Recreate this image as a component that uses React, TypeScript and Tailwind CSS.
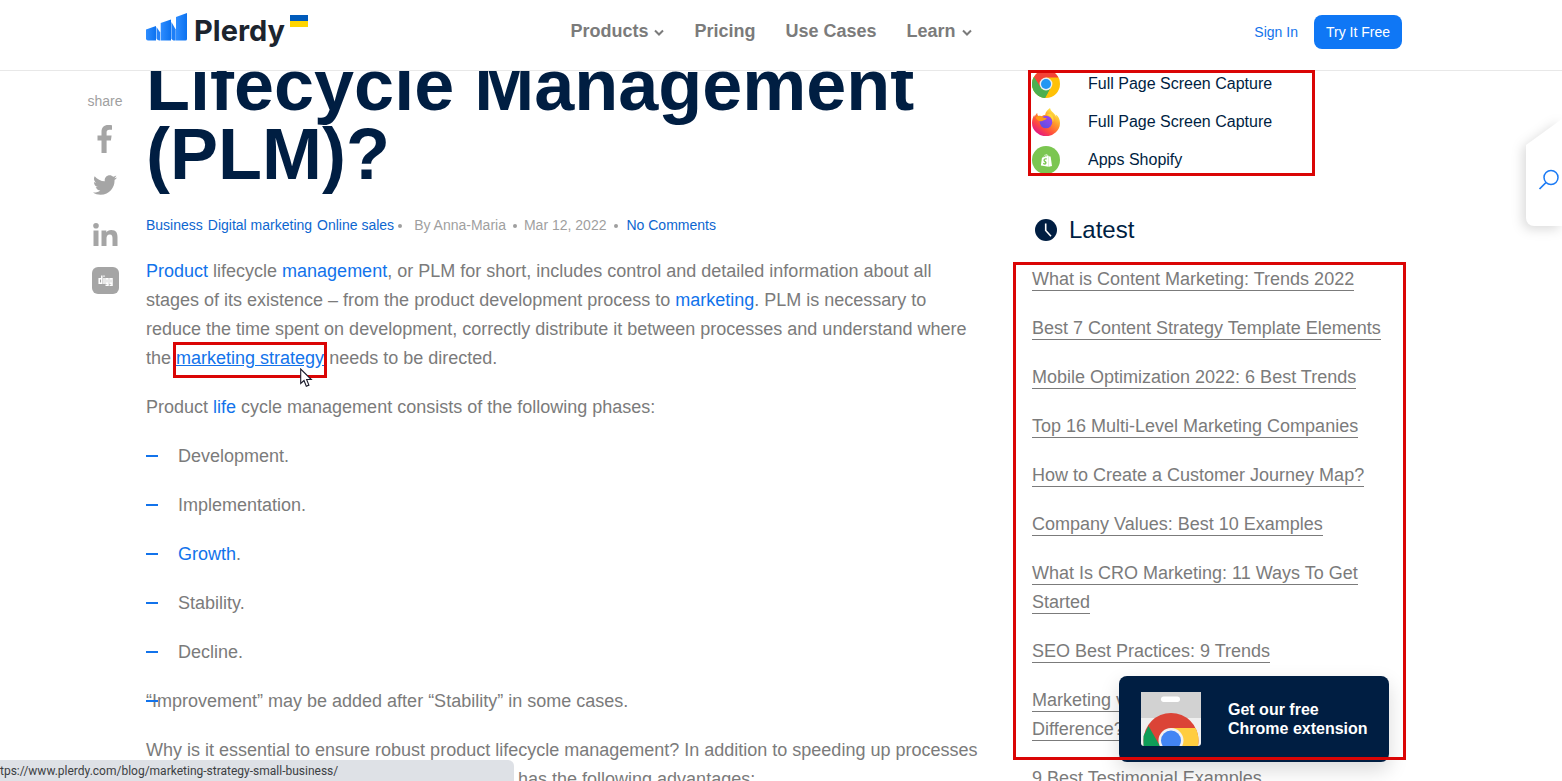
import React from "react";
import { FaShopify, FaTwitter } from "react-icons/fa";

const phases = ["Development.", "Implementation.", "Growth.", "Stability.", "Decline."];

const latest = [
  "What is Content Marketing: Trends 2022",
  "Best 7 Content Strategy Template Elements",
  "Mobile Optimization 2022: 6 Best Trends",
  "Top 16 Multi-Level Marketing Companies",
  "How to Create a Customer Journey Map?",
  "Company Values: Best 10 Examples",
  "What Is CRO Marketing: 11 Ways To Get Started",
  "SEO Best Practices: 9 Trends",
  "Marketing vs Advertising: What’s the Difference?",
  "9 Best Testimonial Examples",
];

function Logo() {
  return (
    <a href="#" className="flex items-start pb-[2px]" aria-label="Plerdy">
      <svg width="42" height="28" viewBox="0 0 42 28" className="mt-px shrink-0">
        <defs>
          <linearGradient id="bars" x1="0" x2="1">
            <stop offset="0" stopColor="#2e8dff" />
            <stop offset="1" stopColor="#0c72f0" />
          </linearGradient>
        </defs>
        <path d="M0 16.500 10 13v14.500H2a2 2 0 0 1-2-2z" fill="url(#bars)" />
        <path d="M10.500 14 14.200 19.500v8h-.7c-1.500 0-2.300-.8-3-2z" fill="#2583fa" />
        <path d="M14.700 10 25 6.500v21H14.700z" fill="url(#bars)" />
        <path d="M25.400 9 29.700 16.500v11h-1.500c-1.200 0-2-.5-2.800-2z" fill="#1d7ff8" />
        <path d="M30 4 41 0v26a1.500 1.500 0 0 1-1.500 1.500H30z" fill="url(#bars)" />
      </svg>
      <span className="ml-[6px] font-['Inter'] text-[29px] leading-[38px] font-bold text-[#1c242e]">Plerdy</span>
      <svg width="18" height="12" className="mt-[3px] ml-[5px] shrink-0">
        <rect width="18" height="6" fill="#005bbb" />
        <rect y="6" width="18" height="6" fill="#ffd500" />
      </svg>
    </a>
  );
}

function Chevron() {
  return (
    <svg width="10" height="8" viewBox="0 0 10 8" className="mt-[3px]">
      <path d="M1 1.500 5 5.500 9 1.500" fill="none" stroke="#7b7b7b" strokeWidth="2" />
    </svg>
  );
}

function FacebookMark() {
  return (
    <svg width="16" height="28" viewBox="0 0 16 28" fill="#a5a5a5">
      <path d="M4.500 28V15.500H.5v-5h4V7c0-4.600 2.600-7 6.600-7 1.700 0 3.400.2 3.900.3v4.500h-2.700c-2 0-2.700 1-2.700 2.500v3.200h5l-.7 5H9.600V28z" />
    </svg>
  );
}

function LinkedinMark() {
  return (
    <svg width="25" height="23" viewBox="0 0 25 23" fill="#a5a5a5">
      <circle cx="3" cy="2.800" r="2.800" />
      <path d="M.5 7.500h5V23h-5z" />
      <path d="M8.500 7.500h4.800v2.100c.8-1.400 2.500-2.500 5-2.500 5 0 6.200 3 6.200 7.400V23h-5v-7.600c0-2-.3-4-2.700-4-2.600 0-3.300 1.900-3.300 4V23h-5z" />
    </svg>
  );
}

function ClockIcon() {
  return (
    <svg width="22" height="22" viewBox="0 0 22 22">
      <circle cx="11" cy="11" r="11" fill="#001e42" />
      <path d="M10.700 4.500v7l5.300 5.700" fill="none" stroke="#fff" strokeWidth="1.600" />
    </svg>
  );
}

function ChromeIcon() {
  return (
    <svg width="28" height="28" viewBox="0 0 28 28">
      <circle cx="14" cy="14" r="14" fill="#ffc107" />
      <path d="M1.900 7A14 14 0 0 0 13 28l6-11-5-3z" fill="#4caf50" />
      <path d="M1.900 7A14 14 0 0 1 26.500 7.600H14L8.500 17.500z" fill="#f44336" />
      <path d="M1.900 7A14 14 0 0 0 13 28l5.500-10.500-9.500.5z" fill="#4caf50" />
      <circle cx="14" cy="14" r="6.400" fill="#eceff1" />
      <circle cx="14" cy="14" r="5" fill="#2196f3" />
    </svg>
  );
}

function FirefoxIcon() {
  return (
    <svg width="28" height="28" viewBox="0 0 28 28">
      <defs>
        <linearGradient id="ffBody" x1="0.850" y1="0.100" x2="0.200" y2="0.950">
          <stop offset="0" stopColor="#fff14a" />
          <stop offset="0.350" stopColor="#ff9a2a" />
          <stop offset="0.700" stopColor="#ff4a3f" />
          <stop offset="1" stopColor="#e0148c" />
        </linearGradient>
        <linearGradient id="ffGlobe" x1="0.800" y1="0" x2="0.200" y2="1">
          <stop offset="0" stopColor="#a044f0" />
          <stop offset="1" stopColor="#5a4fe0" />
        </linearGradient>
      </defs>
      <path
        d="M18 0c.6 2.800 3 4.300 4.600 6.300 1.200 1.500 1.500 2.400 1.700 3.100 0-1-.2-2-.6-2.900C26.500 8.300 28 11.500 28 15a14 13.200 0 0 1-28 0c0-3.300 1-6.300 2.300-8.300 0 .8.100 1.400.3 2C3.300 7.200 4 6 5.200 5c0 1.200.3 2.100.9 2.900 1.200-.1 2.400 0 3.500.4 1-.9 2.300-1.400 3.700-1.500C13 4.500 15.500 1.800 18 0z"
        fill="url(#ffBody)"
      />
      <circle cx="14" cy="14" r="6.300" fill="url(#ffGlobe)" />
      <path d="M3.500 9.500c2-1.800 5-1.800 7-.5 1 .7 2 1 4.200 1-.2 1.700-2.600 2-3.600 2.600-1 .7-2 .8-3.600.4C5.500 12.600 4.500 11.500 3.500 9.500z" fill="#ff9a16" />
      <path d="M14.500 7c3 .6 6.300 3 6.300 7.500 1.500-3.500.5-7-2.300-9z" fill="#ffd83a" />
    </svg>
  );
}

function ShopifyIcon() {
  return (
    <span className="flex size-7 items-center justify-center rounded-full bg-[#7bc651]">
      <FaShopify className="size-[13px] text-white" />
    </span>
  );
}

function DiggIcon() {
  return (
    <svg width="27" height="27" viewBox="0 0 27 27">
      <rect width="27" height="27" rx="6" fill="#a5a5a5" />
      <g fill="none" stroke="#fff" strokeWidth="1.500">
        <path d="M9.800 8.500v7.800H7.200v-4.600h2.600" />
        <path d="M12 11v6M12 8.500v1.300" />
        <path d="M16 16.300h-2v-4.600h2v6.600h-2.500" />
        <path d="M20 16.300h-2v-4.600h2v6.600h-2.500" />
      </g>
    </svg>
  );
}

function StoreIcon() {
  return (
    <svg width="60" height="54" viewBox="0 0 60 54" className="shrink-0">
      <defs>
        <clipPath id="store">
          <path d="M0 0h60v51a3 3 0 0 1-3 3H3a3 3 0 0 1-3-3z" />
        </clipPath>
      </defs>
      <g clipPath="url(#store)">
        <rect width="60" height="54" fill="#efefef" />
        <rect width="60" height="26" fill="#d2d2d2" />
        <rect x="20" y="4.500" width="19" height="5.500" rx="2.700" fill="#fff" />
        <circle cx="30" cy="48.500" r="27.500" fill="#db4437" />
        <path d="M7.500 34 19 54H2.500V44z" fill="#0f9d58" />
        <path d="M30 36h24.600A27.500 27.500 0 0 1 57 54H30z" fill="#ffcd40" />
        <circle cx="30" cy="48.500" r="12.500" fill="#f1f1f1" />
        <circle cx="30" cy="48.500" r="10" fill="#4285f4" />
      </g>
    </svg>
  );
}

function Pointer() {
  return (
    <svg width="13" height="20" viewBox="0 0 13 20" className="absolute top-6 left-[124px] z-40">
      <path d="M.7 1v14.500l3.300-3 2.300 5.700 2.600-1.100L6.600 11.500h4.700z" fill="#fff" stroke="#1b1b2b" strokeWidth="1.100" />
    </svg>
  );
}

const link = "text-[#1273eb]";

export default function App() {
  return (
    <div className="relative h-screen overflow-hidden bg-white font-['Liberation_Sans',Arial,sans-serif] text-lg leading-[29px] text-[#7b7b7b]">
      <header className="absolute inset-x-0 top-0 z-20 h-[71px] border-b border-[#e8e8e8] bg-white pr-[160px] pl-[146px]">
        <div className="grid h-16 grid-cols-[1fr_auto_1fr] items-center">
          <Logo />
          <nav className="flex items-center gap-[30px] pr-[6px] pb-[2px] font-bold">
            <button className="flex items-center gap-[6px]">
              Products <Chevron />
            </button>
            <a href="#">Pricing</a>
            <a href="#">Use Cases</a>
            <button className="flex items-center gap-[6px]">
              Learn <Chevron />
            </button>
          </nav>
          <div className="flex items-center justify-end gap-4 text-sm">
            <a href="#" className={link}>Sign In</a>
            <button className="h-[34px] rounded-lg bg-[#0f77f5] px-3 text-white">Try It Free</button>
          </div>
        </div>
      </header>

      <main className="grid grid-cols-[82px_minmax(0,1fr)_370px] pr-[160px] pl-16">
        <aside className="flex flex-col items-center pt-[91px] text-sm leading-5 text-[#9f9f9f]">
          <span>share</span>
          <a href="#" aria-label="Facebook" className="mt-[14px]"><FacebookMark /></a>
          <a href="#" aria-label="Twitter" className="mt-5"><FaTwitter className="size-6 text-[#a5a5a5]" /></a>
          <a href="#" aria-label="LinkedIn" className="mt-[26px]"><LinkedinMark /></a>
          <a href="#" aria-label="Digg" className="mt-[21px]"><DiggIcon /></a>
        </aside>

        <article className="pt-[51px] pr-[46px]">
          <h1 className="text-[72px] leading-[69px] font-bold text-[#001e42]">Lifecycle Management (PLM)?</h1>
          <div className="mt-[26px] mb-[22px] flex items-center text-sm leading-5 text-[#9f9f9f]">
            <div className="flex gap-[5px] text-[#0d66d0]">
              <a href="#">Business</a>
              <a href="#">Digital marketing</a>
              <a href="#">Online sales</a>
            </div>
            <i className="mt-[2px] mr-3 ml-1 size-1 rounded-full bg-[#9f9f9f]" />
            <span>By Anna-Maria</span>
            <i className="mx-[7px] mt-[2px] size-1 rounded-full bg-[#9f9f9f]" />
            <time>Mar 12, 2022</time>
            <i className="mx-2 mt-[2px] size-1 rounded-full bg-[#9f9f9f]" />
            <a href="#" className="text-[#0d66d0]">No Comments</a>
          </div>
          <div className="space-y-5">
            <p>
              <a href="#" className={link}>Product</a> lifecycle <a href="#" className={link}>management</a>, or PLM for
              short, includes control and detailed information about all stages of its existence – from the product
              development process to <a href="#" className={link}>marketing</a>. PLM is necessary to reduce the time spent
              on development, correctly distribute it between processes and understand where the{" "}
              <span className="relative inline-block">
                <a href="#" className="text-[#1273eb] underline">marketing strategy</a>
                <span className="absolute -inset-x-[3px] -top-[2px] z-30 h-9 border-3 border-[#da0505]" />
                <Pointer />
              </span>{" "}
              needs to be directed.
            </p>
            <p>
              Product <a href="#" className={link}>life</a> cycle management consists of the following phases:
            </p>
            <ul className="space-y-5">
              {phases.map((phase) => (
                <li key={phase} className="flex items-center">
                  <span className="mr-5 mb-[2px] h-[2px] w-3 bg-[#1273eb]" />
                  {phase === "Growth." ? (
                    <span><a href="#" className={link}>Growth</a>.</span>
                  ) : (
                    <span>{phase}</span>
                  )}
                </li>
              ))}
            </ul>
            <p className="relative">
              “Improvement” may be added after “Stability” in some cases.
              <span className="absolute top-[13px] left-0 h-[2px] w-3 bg-[#1273eb]" />
            </p>
            <p>
              Why is it essential to ensure robust product lifecycle management? In addition to speeding up processes
              <span className="block pl-[372px]">has the following advantages:</span>
            </p>
          </div>
        </article>

        <aside className="pt-[65px]">
          <div className="relative text-base text-[#001e42]">
            <a href="#" className="flex h-[38px] items-center gap-7"><ChromeIcon />Full Page Screen Capture</a>
            <a href="#" className="flex h-[38px] items-center gap-7"><FirefoxIcon />Full Page Screen Capture</a>
            <a href="#" className="flex h-[38px] items-center gap-7"><ShopifyIcon />Apps Shopify</a>
            <span className="absolute top-[5px] -left-1 z-30 h-[106px] w-[287px] border-3 border-[#da0505]" />
          </div>
          <h2 className="mt-[33px] flex h-9 items-center gap-3 pl-[3px] text-2xl text-[#001e42]">
            <ClockIcon /> Latest
          </h2>
          <div className="relative mt-[17px]">
            <ul className="space-y-5">
              {latest.map((title) => (
                <li key={title}>
                  <a href="#" className="border-b border-[#7b7b7b] pb-px">{title}</a>
                </li>
              ))}
            </ul>
            <span className="absolute -top-[3px] -left-[19px] z-30 h-[498px] w-[393px] border-3 border-[#da0505]" />
          </div>
        </aside>
      </main>

      <button aria-label="Search" className="absolute top-[119px] right-0 drop-shadow-[-3px_3px_6px_rgba(0,0,0,0.15)]">
        <svg width="36" height="107" viewBox="0 0 36 107">
          <path d="M36 0v107H8a8 8 0 0 1-8-8V26z" fill="#fff" />
          <circle cx="25" cy="58.500" r="7" fill="none" stroke="#1a7af5" strokeWidth="1.500" />
          <path d="m20 63.500-6.500 6.500" stroke="#1a7af5" strokeWidth="1.700" />
        </svg>
      </button>

      <a
        href="#"
        className="absolute right-[173px] bottom-[19px] z-20 flex h-[86px] w-[270px] items-center gap-[27px] rounded-lg bg-[#001e42] pb-px pl-[22px] text-base leading-[19px] font-bold text-white shadow-[0_8px_20px_rgba(0,0,0,0.15)]"
      >
        <StoreIcon />
        <span>Get our free<br />Chrome extension</span>
      </a>

      <div className="absolute bottom-0 left-0 z-20 h-[21px] w-[514px] rounded-tr-md bg-[#dee1e6] font-['Roboto',sans-serif] text-xs leading-[22px] text-[#3c4043]">
        tps://www.plerdy.com/blog/marketing-strategy-small-business/
      </div>
    </div>
  );
}
